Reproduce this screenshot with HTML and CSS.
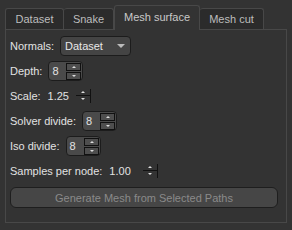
FILE: index.html
```html
<!DOCTYPE html>
<html lang="en">
<head>
  <meta charset="UTF-8">
  <title>Mesh surface</title>
  <link rel="stylesheet" href="styles.css">
</head>
<body>
  <div class="tabs">
    <div class="tab">Dataset</div>
    <div class="tab">Snake</div>
    <div class="tab active">Mesh surface</div>
    <div class="tab">Mesh cut</div>
  </div>

  <div class="pane">
    <div class="row">
      <span class="label">Normals:</span>
      <div class="combo">
        <span>Dataset</span>
        <span class="combo_arrow"></span>
      </div>
    </div>
    <div class="row">
      <span class="label">Depth:</span>
      <div class="spin">
        <span class="spin_value">8</span>
        <div class="spin_btns">
          <span class="spin_btn up"></span>
          <span class="spin_btn down"></span>
        </div>
      </div>
    </div>
    <div class="row">
      <span class="label">Scale:</span>
      <div class="spin flat">
        <span class="spin_value">1.25</span>
        <div class="spin_btns">
          <span class="spin_btn up"></span>
          <span class="spin_btn down"></span>
        </div>
      </div>
    </div>
    <div class="row">
      <span class="label">Solver divide:</span>
      <div class="spin">
        <span class="spin_value">8</span>
        <div class="spin_btns">
          <span class="spin_btn up"></span>
          <span class="spin_btn down"></span>
        </div>
      </div>
    </div>
    <div class="row">
      <span class="label">Iso divide:</span>
      <div class="spin">
        <span class="spin_value">8</span>
        <div class="spin_btns">
          <span class="spin_btn up"></span>
          <span class="spin_btn down"></span>
        </div>
      </div>
    </div>
    <div class="row">
      <span class="label">Samples per node:</span>
      <div class="spin flat wide">
        <span class="spin_value">1.00</span>
        <div class="spin_btns">
          <span class="spin_btn up"></span>
          <span class="spin_btn down"></span>
        </div>
      </div>
    </div>
    <button class="generate_btn">Generate Mesh from Selected Paths</button>
  </div>
</body>
</html>
```

FILE: styles.css
```css
* {
  margin: 0;
  padding: 0;
  box-sizing: border-box;
}
body {
  width: 292px;
  height: 230px;
  background-color: #333;
  font-family: "Liberation Sans", Arial, sans-serif;
  font-size: 11px;
  color: #e2e2e2;
  overflow: hidden;
}
.tabs {
  display: flex;
  align-items: flex-end;
  height: 29px;
  padding-left: 5px;
}
.tab {
  height: 21px;
  line-height: 20px;
  text-align: center;
  white-space: nowrap;
  border: 1px solid #484848;
  border-bottom: none;
  border-left: none;
  border-radius: 3px 3px 0 0;
  background-color: #2b2b2b;
  color: #bdbdbd;
}
.tab:first-child {
  border-left: 1px solid #484848;
  width: 59px;
}
.tab:nth-child(2) {
  width: 50px;
}
.tab:nth-child(4) {
  width: 64px;
}
.tab.active {
  position: relative;
  height: 25px;
  line-height: 22px;
  width: 86px;
  margin-bottom: -1px;
  border-left: 1px solid #484848;
  background-color: #333;
  color: #c9c9c9;
}
.pane {
  height: 194px;
  margin: 0 5px;
  padding: 6px 6px 0 4px;
  border: 1px solid #484848;
  display: flex;
  flex-direction: column;
  gap: 5px;
}
.row {
  display: flex;
  align-items: center;
  height: 20px;
}
.label {
  margin-right: 6px;
}
.combo {
  display: flex;
  align-items: center;
  justify-content: space-between;
  width: 71px;
  height: 20px;
  padding: 0 5px 0 4px;
  border: 1px solid #1c1c1c;
  border-radius: 4px;
  background-color: #444;
  color: #e8e8e8;
}
.combo_arrow {
  width: 0;
  height: 0;
  border-left: 4px solid transparent;
  border-right: 4px solid transparent;
  border-top: 4px solid #bbb;
}
.spin {
  display: flex;
  align-items: center;
  justify-content: space-between;
  width: 35px;
  height: 20px;
  padding: 0 1px 0 3px;
  border: 1px solid #1c1c1c;
  border-radius: 4px;
  background-color: #4a4a4a;
}
.spin.flat {
  width: 44px;
  height: 16px;
  padding: 0 0 0 1px;
  border: none;
  background: none;
}
.spin.flat.wide {
  width: 50px;
}
.spin_btns {
  display: flex;
  flex-direction: column;
  gap: 1px;
}
.spin_btn {
  position: relative;
  width: 15px;
  height: 8px;
  border: 1px solid #111;
  background-color: #4e4e4e;
}
.spin_btn::after {
  content: "";
  position: absolute;
  left: 5px;
  width: 0;
  height: 0;
  border-left: 2px solid transparent;
  border-right: 2px solid transparent;
}
.spin_btn.up::after {
  top: 2px;
  border-bottom: 2px solid #ddd;
}
.spin_btn.down::after {
  top: 2px;
  border-top: 2px solid #ddd;
}
.flat .spin_btns {
  gap: 0;
  border-right: 1px solid #111;
}
.flat .spin_btn {
  width: 14px;
  height: 7px;
  border: none;
  background: none;
}
.flat .spin_btn.up {
  border-bottom: 1px solid #111;
}
.generate_btn {
  margin-top: 1px;
  height: 21px;
  width: 268px;
  border: 1px solid #1e1e1e;
  border-radius: 6px;
  background-color: #464646;
  font-family: inherit;
  font-size: 11px;
  color: #8a8a8a;
}
```
